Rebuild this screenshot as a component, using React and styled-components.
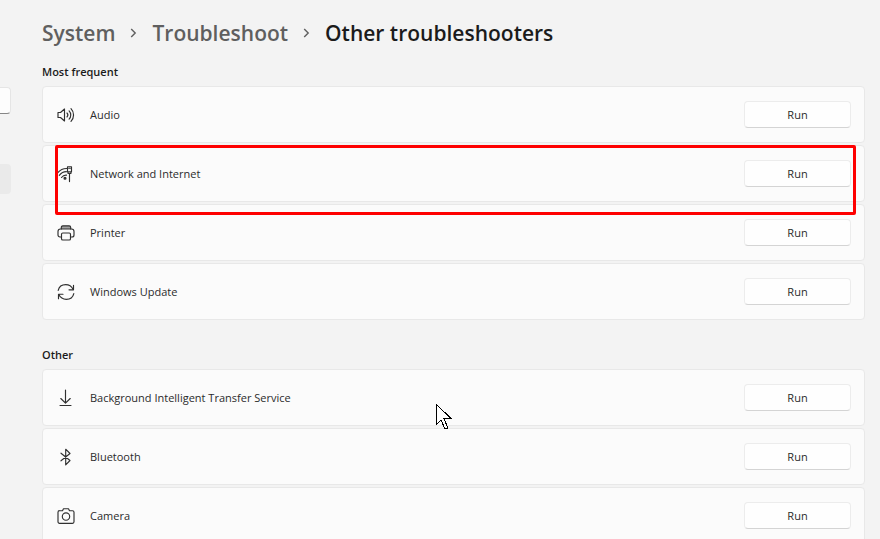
import React from "react";
import styled, { createGlobalStyle } from "styled-components";

const GlobalStyle = createGlobalStyle`
  * {
    box-sizing: border-box;
  }

  body {
    margin: 0;
    background: #f3f3f3;
    color: #1b1b1b;
    font-family: "Open Sans", "Noto Sans", sans-serif;
    font-size: 11px;
    line-height: 16px;
    overflow: hidden;
  }
`;

const Page = styled.div`
  display: flex;
  align-items: flex-start;
  height: 100vh;
  overflow: hidden;
`;

const Sidebar = styled.nav`
  flex: none;
  width: 11px;
  padding-top: 87px;
`;

const SearchInput = styled.input`
  display: block;
  width: 100%;
  height: 27px;
  margin-bottom: 50px;
  padding: 0;
  background: #fdfdfd;
  border: 1px solid #e5e5e5;
  border-bottom-color: #868686;
  border-left: none;
  border-radius: 0 4px 4px 0;
`;

const SidebarLink = styled.a`
  display: block;
  height: 30px;
  background: #eaeaea;
  border-radius: 0 4px 4px 0;
`;

const Main = styled.main`
  flex: 1;
  min-width: 0;
  padding: 18px 15px 0 31px;
`;

const Breadcrumb = styled.header`
  display: flex;
  align-items: center;
  gap: 15px;
  height: 30px;
  margin-bottom: 16px;
  font-size: 21px;
  line-height: 30px;
  white-space: nowrap;
`;

const Crumb = styled.a`
  color: #5f5f5f;
  font-weight: 600;
  text-decoration: none;
`;

const Title = styled.h1`
  margin: 0;
  font-size: 21px;
  font-weight: 600;
`;

const Section = styled.section`
  margin-bottom: 27px;
`;

const SectionTitle = styled.h2`
  margin: 0 0 6px;
  font-size: 11px;
  font-weight: 600;
  line-height: 16px;
`;

const List = styled.ul`
  display: flex;
  flex-direction: column;
  gap: 2px;
  margin: 0;
  padding: 0;
  list-style: none;
`;

const Row = styled.li`
  position: relative;
  display: flex;
  align-items: center;
  gap: 15px;
  height: 57px;
  padding: 0 13px 0 14px;
  background: #fbfbfb;
  border: 1px solid #e8e8e8;
  border-radius: 4px;
`;

const Label = styled.span`
  flex: 1;
  color: #2b2b2b;
`;

const RunButton = styled.button`
  width: 107px;
  height: 27px;
  padding: 0;
  background: #fefefe;
  border: 1px solid #ececec;
  border-bottom-color: #d4d4d4;
  border-radius: 4px;
  color: #2b2b2b;
  font: inherit;
`;

const Highlight = styled.div`
  position: absolute;
  z-index: 1;
  top: -1px;
  right: 8px;
  bottom: -14px;
  left: 12px;
  border: 3px solid #fe0000;
  border-radius: 2px;
  pointer-events: none;
`;

const Icon = styled.svg`
  flex: none;
  width: 18px;
  height: 18px;
  fill: none;
  stroke: #303030;
  stroke-width: 1.15;
  stroke-linecap: round;
  stroke-linejoin: round;
`;

const Chevron = styled.svg`
  flex: none;
  width: 7px;
  height: 10px;
  fill: none;
  stroke: #5f5f5f;
  stroke-width: 1.4;
`;

const Cursor = styled.svg`
  position: absolute;
  z-index: 2;
  top: 403px;
  left: 435px;
  width: 18px;
  height: 27px;
  pointer-events: none;
`;

const icons = {
  audio: (
    <>
      <path d="M1 6.5h2.500L7.500 3v12l-4-3.500H1z" />
      <path d="M10 7c1 1.1 1 2.900 0 4M12.100 4.800c2.200 2.300 2.200 6.100 0 8.400M14 2.600c3.400 3.500 3.400 9.300 0 12.800" />
    </>
  ),
  network: (
    <>
      <path d="M.8 7.7C3.4 4.7 6.4 3.4 9.7 3.5M2.3 10.3c2-2.5 4.5-3.7 7.3-3.6M4.5 12.5c1.4-1.8 3.1-2.6 5-2.4" />
      <circle cx="8" cy="13.2" r="1" fill="#303030" />
      <path d="M10.5 1.7h4v5h-4zM11 6.7v1.6h3V6.7M12.5 8.3v8.3M11.7 3.2h1.6" />
    </>
  ),
  printer: (
    <>
      <path d="M4.3 5V3.4c0-1 .7-1.6 1.6-1.6h6.2c1 0 1.6.7 1.6 1.6V5" fill="#a0a0a0" />
      <path d="M4.5 13H3c-1.2 0-2-.8-2-2V7.5C1 6 2 5 3.4 5h11.2C16 5 17 6 17 7.5V11c0 1.2-.8 2-2 2h-1.5" />
      <rect x="4.5" y="9" width="9" height="7" rx="1.3" />
    </>
  ),
  update: (
    <>
      <path d="M1.2 7.4C2 3.9 5 1.6 8.7 1.6c3.3 0 6 1.8 7.5 4.8" />
      <path d="M16.5 2.3v4.5H12M16.8 10.6c-.8 3.5-3.8 5.8-7.5 5.8-3.3 0-6-1.8-7.5-4.8M1.5 15.7v-4.5H6" />
    </>
  ),
  transfer: <path d="M8.5 1v13M3.8 9.5l4.7 4.7 4.7-4.7M3 16.5h11" />,
  bluetooth: <path d="M4 5.2l9 7.3-4.3 4.3V1.2L13 5.5l-9 7.3" />,
  camera: (
    <>
      <path d="M2.5 3.7h3l1-2h5l1 2h3c.8 0 1.5.7 1.5 1.5v9.6c0 .8-.7 1.5-1.5 1.5h-13c-.8 0-1.5-.7-1.5-1.5V5.2c0-.8.7-1.5 1.5-1.5z" />
      <circle cx="9" cy="9.5" r="3.7" />
    </>
  )
};

const sections = [
  {
    title: "Most frequent",
    items: [
      { name: "Audio", icon: "audio" },
      { name: "Network and Internet", icon: "network", highlighted: true },
      { name: "Printer", icon: "printer" },
      { name: "Windows Update", icon: "update" }
    ]
  },
  {
    title: "Other",
    items: [
      { name: "Background Intelligent Transfer Service", icon: "transfer" },
      { name: "Bluetooth", icon: "bluetooth" },
      { name: "Camera", icon: "camera" }
    ]
  }
];

const Separator = () => (
  <Chevron viewBox="0 0 7 10" aria-hidden="true">
    <path d="M1.2 1l4 4-4 4" />
  </Chevron>
);

const Troubleshooter = ({ item }) => {
  const id = `label-${item.icon}`;
  return (
    <Row>
      <Icon viewBox="0 0 18 18" aria-hidden="true">
        {icons[item.icon]}
      </Icon>
      <Label id={id}>{item.name}</Label>
      <RunButton type="button" aria-describedby={id}>
        Run
      </RunButton>
      {item.highlighted && <Highlight />}
    </Row>
  );
};

const App = () => {
  return (
    <Page>
      <GlobalStyle />
      <Sidebar>
        <SearchInput type="search" aria-label="Find a setting" />
        <SidebarLink href="#system" aria-label="System" />
      </Sidebar>
      <Main>
        <Breadcrumb>
          <Crumb href="#system">System</Crumb>
          <Separator />
          <Crumb href="#troubleshoot">Troubleshoot</Crumb>
          <Separator />
          <Title>Other troubleshooters</Title>
        </Breadcrumb>
        {sections.map(section => (
          <Section key={section.title}>
            <SectionTitle>{section.title}</SectionTitle>
            <List>
              {section.items.map(item => (
                <Troubleshooter key={item.name} item={item} />
              ))}
            </List>
          </Section>
        ))}
      </Main>
      <Cursor viewBox="0 0 18 27" aria-hidden="true">
        <path
          d="M1.5 1.5v20l4.500-4.500 3.500 8h2.500v-2L9 15.500h7z"
          fill="#fff"
          stroke="#000"
          shapeRendering="crispEdges"
        />
      </Cursor>
    </Page>
  );
};

export default App;
